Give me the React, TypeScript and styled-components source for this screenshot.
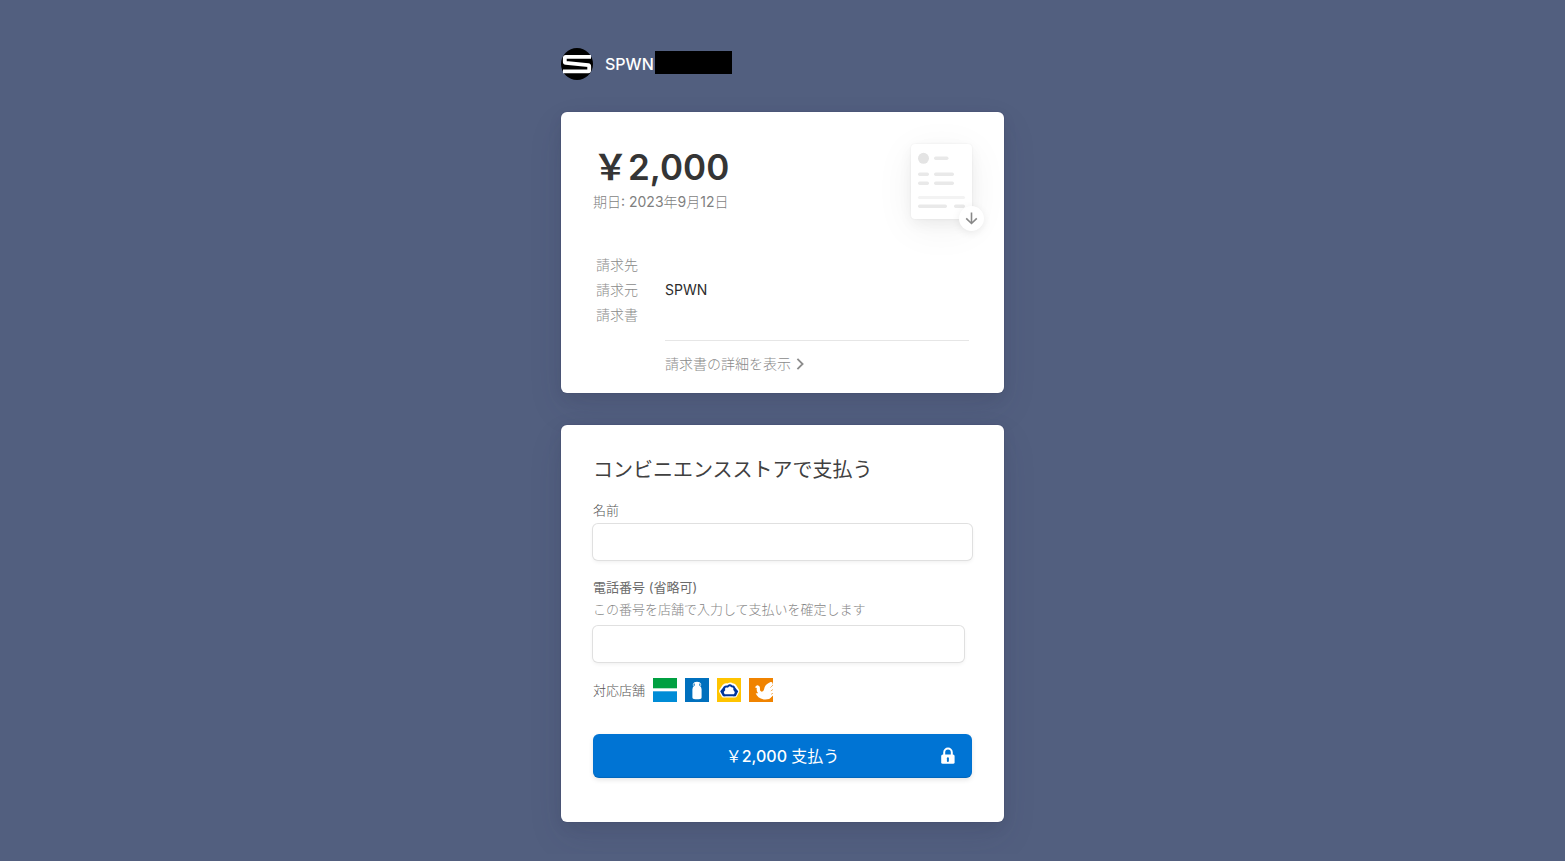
import React from 'react';
import styled, { createGlobalStyle } from 'styled-components';

const GlobalStyle = createGlobalStyle`
  *, *::before, *::after { box-sizing: border-box; }
  body {
    margin: 0;
    background: #525f7f;
    color: #3c3c3c;
    font-family: Inter, "Noto Sans CJK JP", sans-serif;
    font-size: 14px;
    line-height: 20px;
  }
  button, input { font: inherit; }
`;

const Page = styled.main`
  display: flex;
  flex-direction: column;
  gap: 32px;
  width: 100%;
  max-width: 443px;
  margin: 0 auto;
  padding: 48px 0 32px;
`;

const Header = styled.header`
  display: flex;
  align-items: center;
  height: 32px;
`;

const Merchant = styled.span`
  margin-left: 12px;
  color: #fff;
  font-size: 16px;
  font-weight: 500;
`;

const Redaction = styled.span`
  width: 77px;
  height: 23px;
  margin: 0 0 3px 1px;
  background: #000;
`;

const Card = styled.section<{ $bottom: number }>`
  padding: 32px 32px ${(p) => p.$bottom}px;
  border-radius: 6px;
  background: #fff;
  box-shadow: 0 0 0 1px rgba(50, 50, 93, 0.1), 0 15px 35px rgba(50, 50, 93, 0.1),
    0 5px 15px rgba(0, 0, 0, 0.07);
`;

const Summary = styled.div`
  display: flex;
  justify-content: space-between;
  align-items: flex-start;
`;

const Price = styled.h1`
  margin: 0 0 2px;
  color: #353535;
  font-size: 35px;
  font-weight: 600;
  line-height: 46px;
`;

const DueDate = styled.p`
  margin: 0;
  color: #7f7f7f;
  font-weight: 400;
`;

const Download = styled.button`
  position: relative;
  width: 61px;
  height: 75px;
  padding: 0;
  border: 0;
  border-radius: 4px;
  background: #fff;
  box-shadow: 0 0 2px rgba(0, 0, 0, 0.08), 0 5px 14px rgba(0, 0, 0, 0.05),
    0 8px 40px rgba(0, 0, 0, 0.06);
  cursor: pointer;

  > svg { display: block; }
`;

const DownloadBadge = styled.span`
  position: absolute;
  right: -12px;
  bottom: -12px;
  display: grid;
  place-items: center;
  width: 25px;
  height: 25px;
  border-radius: 50%;
  background: #fff;
  box-shadow: 0 2px 8px rgba(0, 0, 0, 0.08);
`;

const Details = styled.table`
  width: 100%;
  margin-top: 33px;
  border-collapse: collapse;

  th, td { height: 25px; padding: 0; text-align: left; }
  th { width: 72px; padding-left: 3px; color: #8a8a8a; font-weight: 300; }
  td { color: #2c2c2c; }
`;

const MoreRow = styled.div`
  margin: 13px 3px 0 72px;
  padding-top: 13px;
  border-top: 1px solid #e6e6e6;
`;

const MoreLink = styled.a`
  display: flex;
  align-items: center;
  gap: 4px;
  color: #8a8a8a;
  font-weight: 300;
  text-decoration: none;
`;

const Title = styled.h2`
  margin: 0 0 17px;
  color: #404040;
  font-size: 20px;
  font-weight: 400;
  line-height: 26px;
`;

const Field = styled.div`
  display: flex;
  flex-direction: column;

  & + & { margin-top: 17px; }
`;

const Label = styled.label<{ $strong?: boolean }>`
  color: ${(p) => (p.$strong ? '#6b6b6b' : '#555')};
  font-size: 13px;
  font-weight: ${(p) => (p.$strong ? 400 : 300)};
`;

const Hint = styled.p`
  margin: 2px 0 0;
  color: #858585;
  font-size: 13px;
  font-weight: 300;
`;

const TextBox = styled.input<{ $inset?: number; $gap: number }>`
  height: 36px;
  margin: ${(p) => p.$gap}px ${(p) => p.$inset ?? 0}px 0 0;
  padding: 8px 12px;
  border: 0;
  border-radius: 5px;
  background: #fff;
  box-shadow: 0 0 0 1px #e0e0e0, 0 2px 4px rgba(0, 0, 0, 0.07);
  outline: none;
`;

const Stores = styled.div`
  display: flex;
  align-items: center;
  gap: 8px;
  margin: 16px 0 32px;
  color: #555;
  font-size: 13px;
  font-weight: 300;
`;

const PayButton = styled.button`
  display: grid;
  grid-template-columns: 1fr auto 1fr;
  align-items: center;
  width: 100%;
  height: 44px;
  padding: 0 16px;
  border: 0;
  border-radius: 6px;
  background: #0074d4;
  box-shadow: inset 0 -1px 1px rgba(0, 0, 0, 0.12), 0 2px 5px rgba(0, 0, 0, 0.1);
  color: #fff;
  font-size: 16px;
  font-weight: 500;
  cursor: pointer;

  > svg { grid-column: 3; justify-self: end; }
`;

const PayLabel = styled.span`
  grid-column: 2;
`;

const Light = styled.span`
  font-weight: 300;
`;

const Regular = styled.span`
  font-weight: 400;
`;

function SpwnLogo() {
  return (
    <svg width="32" height="32" viewBox="0 0 32 32" aria-hidden="true">
      <circle cx="16" cy="16" r="16" fill="#000" />
      <path
        d="M30 8.8H4.8Q3.8 8.8 3.8 9.8V13.9Q3.8 14.7 4.8 14.8L27.2 17.1Q28.2 17.2 28.2 18.2V22.3Q28.2 23.3 27.2 23.3H2"
        fill="none"
        stroke="#fff"
        strokeWidth="3.8"
      />
    </svg>
  );
}

function InvoiceSheet() {
  return (
    <svg width="61" height="75" viewBox="0 0 61 75" aria-hidden="true">
      <circle cx="12.5" cy="14.3" r="5.5" fill="#e4e4e4" />
      <g fill="#e9e9e9">
        <rect x="23" y="12.5" width="14.5" height="3.5" rx="1.7" />
        <rect x="7" y="28.5" width="11" height="3.5" rx="1.7" />
        <rect x="23" y="28.5" width="20" height="3.5" rx="1.7" />
        <rect x="7" y="37.5" width="11" height="3.5" rx="1.7" />
        <rect x="23" y="37.5" width="20" height="3.5" rx="1.7" />
        <rect x="7" y="60.5" width="29" height="3.5" rx="1.7" />
        <rect x="43" y="60.5" width="11" height="3.5" rx="1.7" />
      </g>
      <rect x="7" y="52" width="47" height="3" rx="1.5" fill="#f3f3f3" />
    </svg>
  );
}

function FamilyMart() {
  return (
    <svg width="24" height="24" viewBox="0 0 24 24" role="img" aria-label="FamilyMart">
      <rect width="24" height="24" fill="#fff" />
      <rect width="24" height="10.3" fill="#00a041" />
      <rect y="13.3" width="24" height="10.7" fill="#008cd6" />
    </svg>
  );
}

function Lawson() {
  return (
    <svg width="24" height="24" viewBox="0 0 24 24" role="img" aria-label="Lawson">
      <rect width="24" height="24" fill="#0070bd" />
      <path
        d="M9.2 4.2Q12 3.2 14.8 4.2V5.6L14.3 6V7.6Q16.6 8.8 16.6 11.2V19.6Q16.6 20.8 15.2 21Q12 21.4 8.8 21Q7.4 20.8 7.4 19.6V11.2Q7.4 8.8 9.7 7.6V6L9.2 5.6Z"
        fill="#fff"
      />
      <path d="M9 4.8Q7.8 5.4 8.4 8M15 4.8Q16.2 5.4 15.6 8" fill="none" stroke="#fff" strokeWidth=".7" />
    </svg>
  );
}

function Ministop() {
  return (
    <svg width="24" height="24" viewBox="0 0 24 24" role="img" aria-label="Ministop">
      <rect width="24" height="24" fill="#ffc400" />
      <path
        d="M6.8 17.2L4.4 13L7.6 8.4Q9 7.4 10.8 8Q13 6 14.8 7.6Q17 7.4 17.6 9.4L20 13L17.8 17.2Z"
        fill="#fff"
        stroke="#fff"
        strokeWidth="4.8"
        strokeLinejoin="round"
      />
      <path d="M3.2 13.2L7 8.4L8 12L6.8 14.2L8.4 18.2H6Z" fill="#00369d" />
      <path d="M21.2 13.2L17.8 9.2L16.6 12L17.8 14.2L16.2 18.2H18.8Z" fill="#00369d" />
      <path
        d="M7 17.2H17.6M7.2 12.6Q6.4 7.6 10.6 8.6Q12.8 6.2 14.6 8.2Q17.8 8 17.4 12.4"
        fill="none"
        stroke="#00369d"
        strokeWidth="2"
      />
    </svg>
  );
}

function Seicomart() {
  return (
    <svg width="24" height="24" viewBox="0 0 24 24" role="img" aria-label="Seicomart">
      <rect width="24" height="24" fill="#f08300" />
      <path
        d="M5.8 9.2L8 7.2Q10.8 7 11 9.7Q10.5 12.7 12.3 13.6Q14.4 14 15 11.5Q15.6 6.6 21.5 4.1Q24 3.4 23.6 6.4L24 6.2V18.5Q20.4 22 14.8 21.4Q8.2 20.5 6.7 15.1Q8.1 15.8 9 15.1Q7.2 13 7.8 9.9Z"
        fill="#fff"
      />
      <path d="M21.4 9.6L24 7M21.8 13L24 11.4M22 16.4L24 15.2" stroke="#f08300" strokeWidth=".6" />
      <path d="M24 17.4V20L20.6 21Z" fill="#f08300" />
    </svg>
  );
}

function LockIcon() {
  return (
    <svg width="16" height="18" viewBox="0 0 16 18" aria-hidden="true">
      <path d="M4.2 8.5V5.4a3.8 3.8 0 0 1 7.6 0V8.5" fill="none" stroke="#fff" strokeWidth="2" />
      <rect x="1.2" y="7.5" width="13.4" height="9.3" rx="1.6" fill="#fff" />
      <path d="M7.9 11.3V13.9" stroke="#0074d4" strokeWidth="2" strokeLinecap="round" />
    </svg>
  );
}

export default function App() {
  return (
    <>
      <GlobalStyle />
      <Page lang="ja">
        <Header>
          <SpwnLogo />
          <Merchant>SPWN</Merchant>
          <Redaction />
        </Header>

        <Card $bottom={19}>
          <Summary>
            <div>
              <Price>￥2,000</Price>
              <DueDate>
                <Light>期日</Light>: 2023<Light>年</Light>9<Light>月</Light>12<Light>日</Light>
              </DueDate>
            </div>
            <Download type="button" aria-label="請求書をダウンロード">
              <InvoiceSheet />
              <DownloadBadge>
                <svg width="13" height="13" viewBox="0 0 14 14" aria-hidden="true">
                  <path d="M7 0.6V12M1.3 6.9L7 12.4L12.7 6.9" fill="none" stroke="#888" strokeWidth="1.7" />
                </svg>
              </DownloadBadge>
            </Download>
          </Summary>
          <Details>
            <tbody>
              <tr>
                <th scope="row">請求先</th>
                <td />
              </tr>
              <tr>
                <th scope="row">請求元</th>
                <td>SPWN</td>
              </tr>
              <tr>
                <th scope="row">請求書</th>
                <td />
              </tr>
            </tbody>
          </Details>
          <MoreRow>
            <MoreLink href="#details">
              請求書の詳細を表示
              <svg width="10" height="12" viewBox="0 0 10 12" aria-hidden="true">
                <path d="M2.4 0.8L7.6 6L2.4 11.2" fill="none" stroke="#8c8c8c" strokeWidth="1.8" />
              </svg>
            </MoreLink>
          </MoreRow>
        </Card>

        <Card as="form" $bottom={44} onSubmit={(e: React.FormEvent) => e.preventDefault()}>
          <Title>コンビニエンスストアで支払う</Title>
          <Field>
            <Label htmlFor="name">名前</Label>
            <TextBox id="name" type="text" $gap={4} />
          </Field>
          <Field>
            <Label htmlFor="phone" $strong>電話番号 (省略可)</Label>
            <Hint id="phone-hint">この番号を店舗で入力して支払いを確定します</Hint>
            <TextBox id="phone" type="tel" aria-describedby="phone-hint" $inset={8} $gap={7} />
          </Field>
          <Stores>
            対応店舗
            <FamilyMart />
            <Lawson />
            <Ministop />
            <Seicomart />
          </Stores>
          <PayButton type="submit">
            <PayLabel>
              <Regular>￥</Regular>2,000 <Regular>支払う</Regular>
            </PayLabel>
            <LockIcon />
          </PayButton>
        </Card>
      </Page>
    </>
  );
}
